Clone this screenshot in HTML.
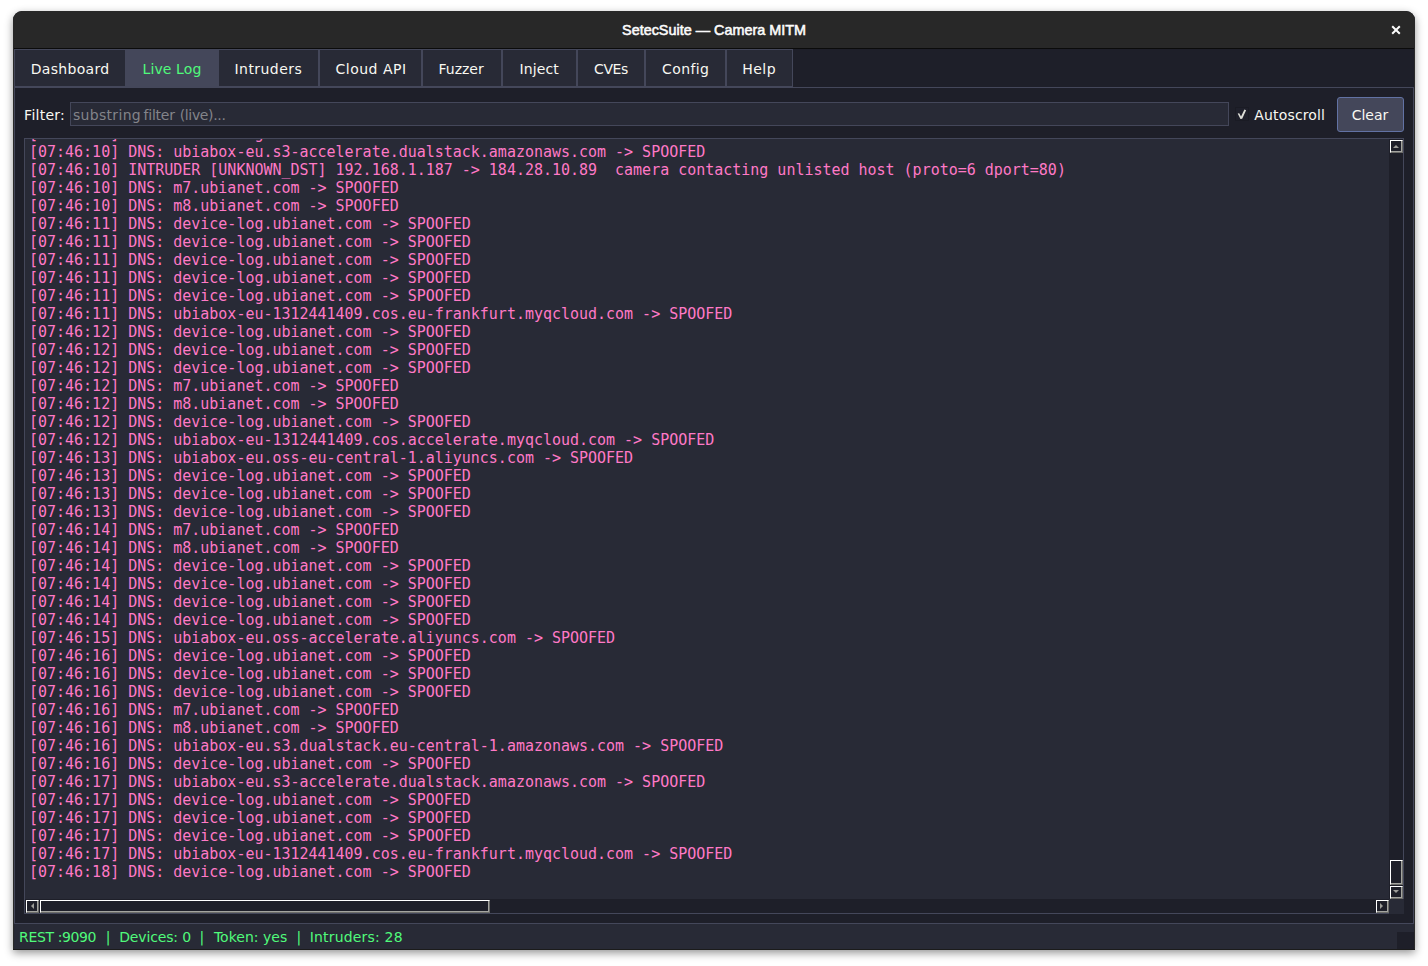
<!DOCTYPE html>
<html lang="en"><head><meta charset="utf-8"><title>SetecSuite — Camera MITM</title>
<style>
html,body{margin:0;padding:0;}
body{width:1428px;height:966px;overflow:hidden;background:#fff;position:relative;font-family:"DejaVu Sans","Liberation Sans",sans-serif;font-size:14px;color:#f8f8f2;}
.a{position:absolute;}
#win{left:13px;top:11px;width:1402px;height:939px;background:#1e1f29;border-radius:9px 9px 0 0;box-shadow:0 3px 8px rgba(0,0,0,.42);}
#tb{left:13px;top:11px;width:1402px;height:37px;background:#282828;border-radius:9px 9px 0 0;}
#tbl{left:13px;top:48px;width:1402px;height:1px;background:#0b0b0b;}
#title{left:414px;top:19.5px;width:600px;height:20px;line-height:20px;text-align:center;font-family:"Liberation Sans",sans-serif;font-weight:400;font-size:14.4px;color:#fcfcfc;-webkit-text-stroke:0.55px #fcfcfc;white-space:pre;}
.tab{top:49px;height:37px;box-sizing:border-box;border:1px solid #44475a;border-bottom:0;background:#282a36;}
.tab.sel{background:#44475a;height:39px;z-index:2;}
.tl{height:22px;line-height:22px;white-space:pre;z-index:3;}
.lbl{white-space:pre;height:22px;line-height:22px;}
#band{left:14px;top:87px;width:1400px;height:1px;background:#44475a;}
#band2{left:14px;top:86px;width:779px;height:1px;background:#44475a;}
#pl{left:14px;top:88px;width:1px;height:836px;background:#44475a;}
#pr{left:1413px;top:88px;width:1px;height:836px;background:#44475a;}
#pb{left:14px;top:923px;width:1400px;height:1px;background:#44475a;}
#entry{left:70px;top:102px;width:1159px;height:24px;box-sizing:border-box;border:1px solid #44475a;background:#282a36;}
#chk{left:1235px;top:107px;width:14px;height:14px;box-sizing:border-box;border:1px solid #1a1b24;background:#1f202b;}
#btn{left:1337px;top:97px;width:67px;height:35px;box-sizing:border-box;border:1px solid #6272a4;border-radius:3px;background:#44475a;}
#frame{left:24px;top:138px;width:1380px;height:776px;box-sizing:border-box;border:1px solid #44475a;background:#282a36;}
#log{left:25px;top:139px;width:1364px;height:760px;overflow:hidden;background:#282a36;}
#log div{position:absolute;left:4px;height:18px;line-height:18px;margin:0;font-family:"DejaVu Sans Mono","Liberation Mono",monospace;font-size:14.95px;color:#ff79c6;white-space:pre;transform:scale(1.0026,1.097);transform-origin:0 14px;}
.tr{background:#1e1f29;}
.sb{box-sizing:border-box;background:#1e1f29;border-top:1px solid #fff;border-left:1px solid #fff;border-right:1px solid #6c6c69;border-bottom:1px solid #6c6c69;box-shadow:inset -1px -1px 0 #a4a4a0;}
#status{left:13px;top:924px;width:1402px;height:26px;background:#282a36;}
#grip{left:1397px;top:932px;width:17px;height:17px;background:#1e1f29;}
.st{height:22px;line-height:22px;color:#50fa7b;white-space:pre;}
</style></head>
<body>
<div id="win" class="a"></div>
<div id="tb" class="a"></div><div id="tbl" class="a"></div>
<div id="title" class="a">SetecSuite — Camera MITM</div>
<svg class="a" style="left:1390px;top:24px" width="12" height="12" viewBox="0 0 12 12"><path d="M2.2 2.2 L9.8 9.8 M9.8 2.2 L2.2 9.8" stroke="#fcfcfc" stroke-width="2" stroke-linecap="butt" fill="none"/></svg>
<div class="a tab" style="left:14px;width:112px"></div>
<div class="a tab sel" style="left:125px;width:94px"></div>
<div class="a tab" style="left:218px;width:101px"></div>
<div class="a tab" style="left:319px;width:103px"></div>
<div class="a tab" style="left:422px;width:80px"></div>
<div class="a tab" style="left:502px;width:75px"></div>
<div class="a tab" style="left:577px;width:68px"></div>
<div class="a tab" style="left:645px;width:81px"></div>
<div class="a tab" style="left:726px;width:67px"></div>
<div id="band" class="a"></div><div id="band2" class="a"></div>
<div class="a tl" style="left:30.75px;top:58px;letter-spacing:0.312px;">Dashboard</div>
<div class="a tl" style="left:142.5px;top:58px;letter-spacing:0.114px;color:#50fa7b;">Live Log</div>
<div class="a tl" style="left:234.5px;top:58px;letter-spacing:0.45px;">Intruders</div>
<div class="a tl" style="left:335.55px;top:58px;letter-spacing:0.487px;">Cloud API</div>
<div class="a tl" style="left:438.5px;top:58px;letter-spacing:0.0px;">Fuzzer</div>
<div class="a tl" style="left:519.5px;top:58px;letter-spacing:0.12px;">Inject</div>
<div class="a tl" style="left:594.1px;top:58px;letter-spacing:-0.467px;">CVEs</div>
<div class="a tl" style="left:662.0px;top:58px;letter-spacing:0.4px;">Config</div>
<div class="a tl" style="left:742.3px;top:58px;letter-spacing:0.467px;">Help</div>
<div id="pl" class="a"></div><div id="pr" class="a"></div><div id="pb" class="a"></div>
<div class="a lbl" style="left:24.1px;top:104px;letter-spacing:0.267px;">Filter:</div>
<div id="entry" class="a"></div>
<div class="a lbl" style="left:72.2px;top:104px;letter-spacing:0.325px;color:#83848a;margin-left:0.7px;">substring</div>
<div class="a lbl" style="left:143.55px;top:104px;letter-spacing:-0.22px;color:#83848a;">filter</div>
<div class="a lbl" style="left:179.7px;top:104px;letter-spacing:-0.35px;color:#83848a;">(live)...</div>
<div id="chk" class="a"></div>
<svg class="a" style="left:1235px;top:107px" width="14" height="14" viewBox="0 0 14 14"><path d="M2.7 6.6 L4.2 6.2 L6.05 9.5 L9.4 2.55 L11.1 3.15 L7.2 11.85 L5.45 12 Z" fill="#deded8"/></svg>
<div class="a lbl" style="left:1254.3px;top:104px;letter-spacing:0.156px;">Autoscroll</div>
<div id="btn" class="a"></div>
<div class="a lbl" style="left:1351.65px;top:104px;letter-spacing:0.025px;">Clear</div>
<div id="frame" class="a"></div>
<div id="log" class="a">
<div style="top:-14px">[07:46:10] DNS: device-log.ubianet.com -&gt; SPOOFED</div>
<div style="top:4px">[07:46:10] DNS: ubiabox-eu.s3-accelerate.dualstack.amazonaws.com -&gt; SPOOFED</div>
<div style="top:22px">[07:46:10] INTRUDER [UNKNOWN_DST] 192.168.1.187 -&gt; 184.28.10.89  camera contacting unlisted host (proto=6 dport=80)</div>
<div style="top:40px">[07:46:10] DNS: m7.ubianet.com -&gt; SPOOFED</div>
<div style="top:58px">[07:46:10] DNS: m8.ubianet.com -&gt; SPOOFED</div>
<div style="top:76px">[07:46:11] DNS: device-log.ubianet.com -&gt; SPOOFED</div>
<div style="top:94px">[07:46:11] DNS: device-log.ubianet.com -&gt; SPOOFED</div>
<div style="top:112px">[07:46:11] DNS: device-log.ubianet.com -&gt; SPOOFED</div>
<div style="top:130px">[07:46:11] DNS: device-log.ubianet.com -&gt; SPOOFED</div>
<div style="top:148px">[07:46:11] DNS: device-log.ubianet.com -&gt; SPOOFED</div>
<div style="top:166px">[07:46:11] DNS: ubiabox-eu-1312441409.cos.eu-frankfurt.myqcloud.com -&gt; SPOOFED</div>
<div style="top:184px">[07:46:12] DNS: device-log.ubianet.com -&gt; SPOOFED</div>
<div style="top:202px">[07:46:12] DNS: device-log.ubianet.com -&gt; SPOOFED</div>
<div style="top:220px">[07:46:12] DNS: device-log.ubianet.com -&gt; SPOOFED</div>
<div style="top:238px">[07:46:12] DNS: m7.ubianet.com -&gt; SPOOFED</div>
<div style="top:256px">[07:46:12] DNS: m8.ubianet.com -&gt; SPOOFED</div>
<div style="top:274px">[07:46:12] DNS: device-log.ubianet.com -&gt; SPOOFED</div>
<div style="top:292px">[07:46:12] DNS: ubiabox-eu-1312441409.cos.accelerate.myqcloud.com -&gt; SPOOFED</div>
<div style="top:310px">[07:46:13] DNS: ubiabox-eu.oss-eu-central-1.aliyuncs.com -&gt; SPOOFED</div>
<div style="top:328px">[07:46:13] DNS: device-log.ubianet.com -&gt; SPOOFED</div>
<div style="top:346px">[07:46:13] DNS: device-log.ubianet.com -&gt; SPOOFED</div>
<div style="top:364px">[07:46:13] DNS: device-log.ubianet.com -&gt; SPOOFED</div>
<div style="top:382px">[07:46:14] DNS: m7.ubianet.com -&gt; SPOOFED</div>
<div style="top:400px">[07:46:14] DNS: m8.ubianet.com -&gt; SPOOFED</div>
<div style="top:418px">[07:46:14] DNS: device-log.ubianet.com -&gt; SPOOFED</div>
<div style="top:436px">[07:46:14] DNS: device-log.ubianet.com -&gt; SPOOFED</div>
<div style="top:454px">[07:46:14] DNS: device-log.ubianet.com -&gt; SPOOFED</div>
<div style="top:472px">[07:46:14] DNS: device-log.ubianet.com -&gt; SPOOFED</div>
<div style="top:490px">[07:46:15] DNS: ubiabox-eu.oss-accelerate.aliyuncs.com -&gt; SPOOFED</div>
<div style="top:508px">[07:46:16] DNS: device-log.ubianet.com -&gt; SPOOFED</div>
<div style="top:526px">[07:46:16] DNS: device-log.ubianet.com -&gt; SPOOFED</div>
<div style="top:544px">[07:46:16] DNS: device-log.ubianet.com -&gt; SPOOFED</div>
<div style="top:562px">[07:46:16] DNS: m7.ubianet.com -&gt; SPOOFED</div>
<div style="top:580px">[07:46:16] DNS: m8.ubianet.com -&gt; SPOOFED</div>
<div style="top:598px">[07:46:16] DNS: ubiabox-eu.s3.dualstack.eu-central-1.amazonaws.com -&gt; SPOOFED</div>
<div style="top:616px">[07:46:16] DNS: device-log.ubianet.com -&gt; SPOOFED</div>
<div style="top:634px">[07:46:17] DNS: ubiabox-eu.s3-accelerate.dualstack.amazonaws.com -&gt; SPOOFED</div>
<div style="top:652px">[07:46:17] DNS: device-log.ubianet.com -&gt; SPOOFED</div>
<div style="top:670px">[07:46:17] DNS: device-log.ubianet.com -&gt; SPOOFED</div>
<div style="top:688px">[07:46:17] DNS: device-log.ubianet.com -&gt; SPOOFED</div>
<div style="top:706px">[07:46:17] DNS: ubiabox-eu-1312441409.cos.eu-frankfurt.myqcloud.com -&gt; SPOOFED</div>
<div style="top:724px">[07:46:18] DNS: device-log.ubianet.com -&gt; SPOOFED</div>
</div>
<div class="a tr" style="left:1389px;top:139px;width:14px;height:760px"></div>
<div class="a sb" style="left:1390px;top:140px;width:13px;height:13px"></div>
<svg class="a" style="left:1392px;top:144px" width="8" height="5" viewBox="0 0 8 5"><path d="M1 4 L4 1 L7 4 Z" fill="#9d9d99"/></svg>
<div class="a sb" style="left:1390px;top:860px;width:13px;height:25px"></div>
<div class="a sb" style="left:1390px;top:886px;width:13px;height:13px"></div>
<svg class="a" style="left:1392px;top:889.4px" width="8" height="5" viewBox="0 0 8 5"><path d="M1 1 L4 4 L7 1 Z" fill="#9d9d99"/></svg>
<div class="a tr" style="left:25px;top:899px;width:1364px;height:14px"></div>
<div class="a sb" style="left:26px;top:900px;width:13px;height:13px"></div>
<svg class="a" style="left:30px;top:902px" width="5" height="8" viewBox="0 0 5 8"><path d="M4 1 L1 4 L4 7 Z" fill="#9d9d99"/></svg>
<div class="a sb" style="left:40px;top:900px;width:450px;height:13px"></div>
<div class="a sb" style="left:1376px;top:900px;width:13px;height:13px"></div>
<svg class="a" style="left:1379.3px;top:902px" width="5" height="8" viewBox="0 0 5 8"><path d="M1 1 L4 4 L1 7 Z" fill="#9d9d99"/></svg>
<div class="a" style="left:1389px;top:899px;width:15px;height:15px;background:#282a36"></div>
<div id="status" class="a"></div><div id="grip" class="a"></div>
<div class="a" style="left:13px;top:48px;width:1px;height:902px;background:#2a2a2a"></div><div class="a" style="left:1414px;top:48px;width:1px;height:902px;background:#2a2a2a"></div><div class="a" style="left:13px;top:949px;width:1402px;height:1px;background:#1b1b1b"></div>
<div class="a st" style="left:19.1px;top:926px;letter-spacing:-0.378px;">REST :9090</div>
<div class="a st" style="top:926px;left:48.0px;width:120px;text-align:center">|</div>
<div class="a st" style="left:119.15px;top:926px;letter-spacing:-0.144px;">Devices: 0</div>
<div class="a st" style="top:926px;left:141.8px;width:120px;text-align:center">|</div>
<div class="a st" style="left:213.9px;top:926px;letter-spacing:0.022px;">Token: yes</div>
<div class="a st" style="top:926px;left:238.8px;width:120px;text-align:center">|</div>
<div class="a st" style="left:309.7px;top:926px;letter-spacing:0.183px;">Intruders: 28</div>
</body></html>
